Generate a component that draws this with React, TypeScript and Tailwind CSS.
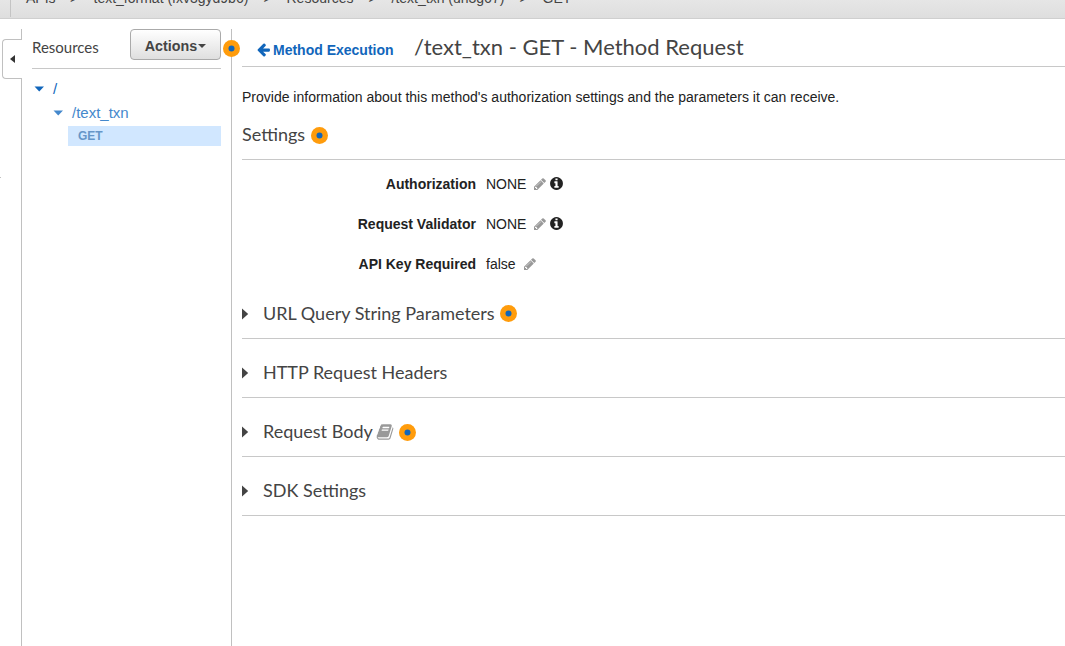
import React from "react";

const PENCIL =
  "M491 1536l91-91-235-235-91 91v107h128v128h107zm523-928q0-22-22-22-10 0-17 7l-542 542q-7 7-7 17 0 22 22 22 10 0 17-7l542-542q7-7 7-17zm-54-192l416 416-832 832h-416v-416zm683 96q0 53-37 90l-166 166-416-416 166-165q36-38 90-38 53 0 91 38l235 234q37 39 37 91z";
const INFO =
  "M1152 1376v-160q0-14-9-23t-23-9h-96v-512q0-14-9-23t-23-9h-320q-14 0-23 9t-9 23v160q0 14 9 23t23 9h96v320h-96q-14 0-23 9t-9 23v160q0 14 9 23t23 9h448q14 0 23-9t9-23zm-128-896v-160q0-14-9-23t-23-9h-192q-14 0-23 9t-9 23v160q0 14 9 23t23 9h192q14 0 23-9t9-23zm640 416q0 209-103 385.5t-279.5 279.5-385.5 103-385.5-103-279.5-279.5-103-385.5 103-385.5 279.5-279.5 385.5-103 385.5 103 279.5 279.5 103 385.5z";
const ARROW =
  "M1664 896v128q0 53-32.5 90.5t-84.5 37.5h-704l293 294q38 36 38 90t-38 90l-75 76q-37 37-90 37-52 0-91-37l-651-652q-37-37-37-90 0-52 37-91l651-650q38-38 91-38 52 0 90 38l75 74q38 38 38 91t-38 91l-293 293h704q52 0 84.5 37.5t32.5 90.5z";
const BOOK =
  "M1703 478q40 57 18 129l-275 906q-19 64-76.5 107.5t-122.5 43.5h-923q-77 0-148.5-53.5t-99.5-131.5q-24-67-2-127 0-4 3-27t4-37q1-8-3-21.5t-3-19.5q2-11 8-21t16.5-23.5 16.5-23.5q23-38 45-91.5t30-91.5q3-10 .5-30t-.5-28q3-11 17-28t17-23q21-36 42-92t25-90q1-9-2.5-32t.5-28q4-13 22-30.5t22-22.5q19-26 42.5-84.5t27.5-96.5q1-8-3-25.5t-2-26.5q2-8 9-18t18-23 17-21q8-12 16.5-30.5t15-35 16-36 19.5-32 26.5-23.5 36-11.5 47.5 5.5l-1 3q38-9 51-9h761q74 0 114 56t18 130l-274 906q-36 119-71.5 153.5t-128.5 34.5h-869q-27 0-38 15-11 16-1 43 24 70 144 70h923q29 0 56-15.5t35-41.5l300-987q7-22 5-57 38 15 59 43zm-1064 2q-4 13 2 22.5t20 9.5h608q13 0 25.5-9.5t16.5-22.5l21-64q4-13-2-22.5t-20-9.5h-608q-13 0-25.5 9.5t-16.5 22.5zm-83 256q-4 13 2 22.5t20 9.5h608q13 0 25.5-9.5t16.5-22.5l21-64q4-13-2-22.5t-20-9.5h-608q-13 0-25.5 9.5t-16.5 22.5z";

function Icon({ d, className }: { d: string; className: string }) {
  return (
    <svg viewBox="0 0 1792 1792" fill="currentColor" className={`shrink-0 ${className}`}>
      <path d={d} />
    </svg>
  );
}

function Caret({ points, className }: { points: string; className: string }) {
  return (
    <svg viewBox="0 0 10 10" fill="currentColor" className={`size-2.5 shrink-0 ${className}`}>
      <polygon points={points} />
    </svg>
  );
}

const DOWN = "0.5,2.5 10,2.5 5.25,7.5";
const RIGHT = "0,-0.5 6.2,5 0,10.5";

function Dot({ className = "" }: { className?: string }) {
  return (
    <svg viewBox="0 0 17 17" className={`size-[17px] shrink-0 ${className}`}>
      <circle cx="8.5" cy="8.5" r="8.5" fill="#ff9c0c" />
      <circle cx="8.5" cy="8.5" r="3" fill="#1166bb" />
    </svg>
  );
}

function Breadcrumbs() {
  return (
    <header className="flex h-[19px] shrink-0 overflow-hidden border-b border-[#cfcfcf] bg-linear-to-b from-[#e6e6e6] to-[#dedede] pl-[10px]">
      <nav className="-mt-[10px] flex h-[27px] border-l border-[#c4c4c4] text-[14px] leading-[16px] whitespace-nowrap text-[#444]">
        <span className="ml-[15px] w-[44px]">APIs</span>
        <span className="w-[23.5px]">&gt;</span>
        <span className="w-[170px]">text_format (fxv3gyd9b6)</span>
        <span className="w-[23px]">&gt;</span>
        <span className="w-[82px]">Resources</span>
        <span className="w-[23px]">&gt;</span>
        <span className="w-[128px]">/text_txn (uh3g67)</span>
        <span className="w-[23px]">&gt;</span>
        <span>GET</span>
      </nav>
    </header>
  );
}

function Sidebar() {
  return (
    <aside className="flex w-[199px] flex-col pl-[10px]">
      <div className="flex h-[40px] w-[189px] items-start justify-between border-b border-[#c8c8c8]">
        <h2 className="mt-[8px] font-['Lato'] text-[15px] leading-[20px] text-[#444]">Resources</h2>
        <button className="flex h-[31px] w-[91px] items-center justify-center gap-px rounded-[4px] border border-[#aaa] bg-linear-to-b from-white to-[#dfdfdf] pt-[2px] text-[14.3px] leading-[20px] font-bold text-[#444]">
          Actions
          <svg viewBox="0 0 8 4" className="mt-px h-1 w-2" fill="currentColor">
            <polygon points="0,0 8,0 4,4" />
          </svg>
        </button>
      </div>
      <div className="mt-[8px] flex h-[24px] items-center gap-[9px] pl-[2px] text-[15px] text-[#1166bb]">
        <Caret points={DOWN} className="" />/
      </div>
      <div className="flex h-[24px] items-center gap-[9px] pl-[21px] text-[15px] text-[#4488cc]">
        <Caret points={DOWN} className="" />/text_txn
      </div>
      <div className="mt-px ml-[36px] flex h-[20px] w-[153px] items-center bg-[#d1e7ff] pl-[10px] text-[12px] font-bold text-[#6696c8]">
        GET
      </div>
    </aside>
  );
}

function SettingRow({ label, value, info }: { label: string; value: string; info?: boolean }) {
  return (
    <div className="flex h-[40px] items-center text-[14px] text-[#222]">
      <span className="w-[234px] text-right font-bold">{label}</span>
      <span className="ml-[10px]">{value}</span>
      <Icon d={PENCIL} className="ml-[7px] size-[14px] text-[#999]" />
      {info && <Icon d={INFO} className="-mt-px ml-[1.5px] size-[15px] text-[#222]" />}
    </div>
  );
}

function Section({ title, book, dot }: { title: string; book?: boolean; dot?: boolean }) {
  return (
    <section className="flex h-[59px] items-center border-b border-[#c8c8c8] pt-[9px] font-['Lato'] text-[18px] text-[#444]">
      <Caret points={RIGHT} className="mr-[11px] overflow-visible" />
      <h3>{title}</h3>
      {book && <Icon d={BOOK} className="ml-[3.5px] size-[18px] text-[#999]" />}
      {dot && <Dot className={book ? "mt-[2px] ml-[4.5px]" : "ml-[5px]"} />}
    </section>
  );
}

export default function App() {
  return (
    <div className="flex h-[646px] w-[1065px] flex-col overflow-hidden bg-white font-['Liberation_Sans',sans-serif]">
      <Breadcrumbs />
      <div className="flex min-h-0 flex-1 pt-[10px]">
        <div className="flex w-[22px] shrink-0 flex-col items-end">
          <div className="h-[11px] w-px bg-[#c0c0c0]" />
          <div className="-mt-px flex h-[40px] w-[20px] items-center rounded-l-[4px] border border-r-0 border-[#c0c0c0] pl-[7px] text-[#333]">
            <svg viewBox="0 0 5 8" className="h-2 w-[5px]" fill="currentColor">
              <polygon points="5,0 5,8 0,4" />
            </svg>
          </div>
          <div className="-mt-px w-px flex-1 bg-[#c0c0c0]" />
          <div className="absolute top-[177px] left-0 h-px w-px bg-[#c0c0c0]" />
        </div>
        <Sidebar />
        <main className="relative ml-[10px] min-w-0 flex-1 border-l border-[#c0c0c0] pl-[10px]">
          <Dot className="absolute top-[11px] -left-[9px]" />
          <div className="flex h-[38px] items-center border-b border-[#c8c8c8]">
            <a className="mt-[5px] ml-[14px] flex w-[158px] items-center gap-[2px] text-[14px] font-bold text-[#1166bb]">
              <Icon d={ARROW} className="-mt-px size-[15px]" />
              Method Execution
            </a>
            <h1 className="-mt-px font-['Lato'] text-[22px] leading-[30px] text-[#444]">/text_txn - GET - Method Request</h1>
          </div>
          <p className="mt-[20px] text-[14px] leading-[20px] text-[#222]">
            Provide information about this method's authorization settings and the parameters it can receive.
          </p>
          <div className="flex h-[53px] items-center border-b border-[#c8c8c8] pt-[4px] font-['Lato'] text-[18px] text-[#444]">
            <h3 className="-mt-[2px]">Settings</h3>
            <Dot className="ml-[6px]" />
          </div>
          <div className="mt-[4px]">
            <SettingRow label="Authorization" value="NONE" info />
            <SettingRow label="Request Validator" value="NONE" info />
            <SettingRow label="API Key Required" value="false" />
          </div>
          <div className="-mt-[4px]">
            <Section title="URL Query String Parameters" dot />
            <Section title="HTTP Request Headers" />
            <Section title="Request Body" book dot />
            <Section title="SDK Settings" />
          </div>
        </main>
      </div>
    </div>
  );
}
